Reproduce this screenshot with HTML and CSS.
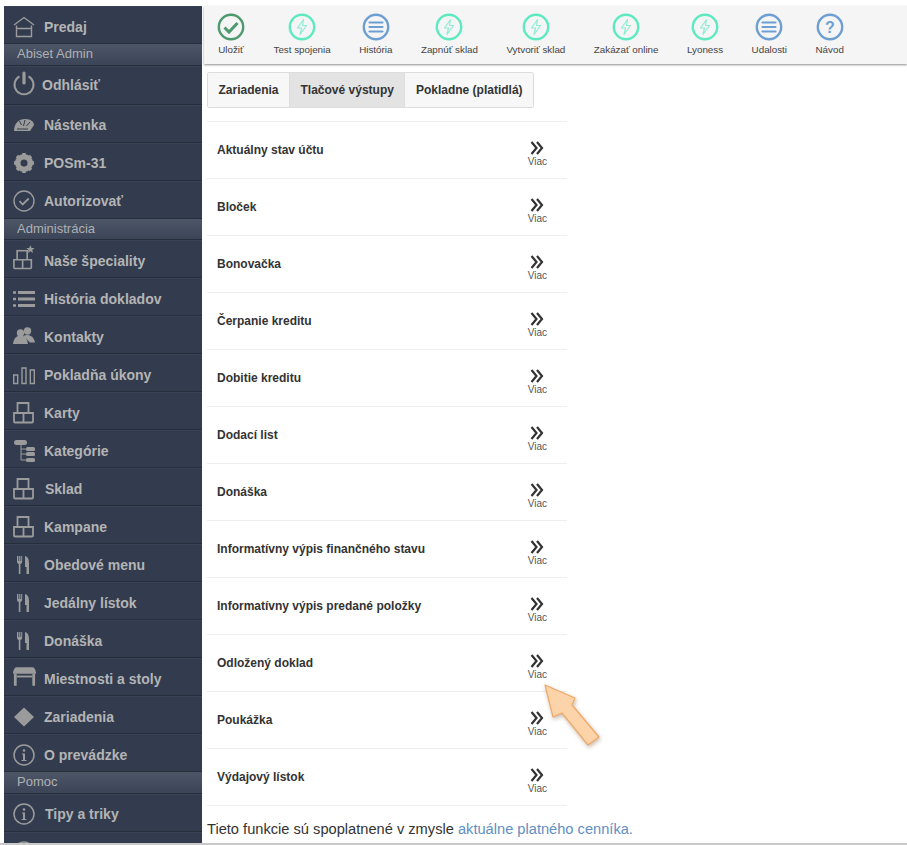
FILE: index.html
```html
<!DOCTYPE html>
<html lang="sk">
<head>
<meta charset="utf-8">
<title>Tlačové výstupy</title>
<link rel="stylesheet" href="styles.css">
</head>
<body>
<svg class="defs" width="0" height="0" aria-hidden="true">
  <symbol id="boxes" viewBox="0 -2 22 22"><path d="M4.500-1h11v10h-11zM1 9h9.500v9.500H2a1 1 0 0 1-1-1zM10.500 9H20v8.500a1 1 0 0 1-1 1h-8.500z" fill="none" stroke="currentColor" stroke-width="1.800"/></symbol>
  <symbol id="cutlery" viewBox="0 0 12 18" preserveAspectRatio="none"><path d="M0 0v5.500q0 2 1.800 2.500v10h1.600V8q1.800-.5 1.800-2.500V0h-1v5h-.8V0H2.200v5h-.8V0z" fill="currentColor"/><path d="M8 0q4 1 4 7v11H9.500v-7H8z" fill="currentColor"/></symbol>
  <symbol id="info" viewBox="0 0 22 22"><circle cx="11" cy="11" r="10" fill="none" stroke="currentColor" stroke-width="1.500"/><circle cx="11" cy="6.500" r="1.300" fill="currentColor"/><path d="M9 9.500h3v6.500h1.500v1h-5v-1H10v-5.500H9z" fill="currentColor"/></symbol>
  <symbol id="bolt" viewBox="0 0 28 28"><circle cx="14" cy="14" r="12.200" fill="none" stroke="#5eeac0" stroke-width="2.400"/><path d="M15.500 6.500 9.500 15h4l-1.500 6.500 6.500-9h-4z" fill="none" stroke="#8feed2" stroke-width="1.200" stroke-linejoin="round"/></symbol>
  <symbol id="lines" viewBox="0 0 28 28"><circle cx="14" cy="14" r="12.200" fill="none" stroke="#6d9fd2" stroke-width="2.400"/><path d="M7.500 9.500h13M7.500 14h13M7.500 18.500h13" stroke="#6d9fd2" stroke-width="2.200" stroke-linecap="round"/></symbol>
  <symbol id="more" viewBox="0 0 14 14"><path d="M1.500 1 6.500 7l-5 6M7 1l5 6-5 6" fill="none" stroke="#333" stroke-width="2.200"/></symbol>
</svg>

<div class="shell">
  <nav class="sidebar">
    <a class="item"><svg class="ico" viewBox="0 0 22 22"><path d="M1 9 11 1.500 21 9M3.500 9.500v11h15v-11M3.500 12.500h15" fill="none" stroke="currentColor" stroke-width="1.400"/></svg>Predaj</a>
    <div class="head">Abiset Admin</div>
    <a class="item item-tall"><svg class="ico ico-power" viewBox="0 0 22 22"><path d="M6.500 3.500a9.500 9.500 0 1 0 9 0" fill="none" stroke="currentColor" stroke-width="2"/><path d="M11 0v10" stroke="currentColor" stroke-width="3.200" stroke-linecap="round"/></svg><span class="nudge-l">Odhlásiť</span></a>
    <a class="item"><svg class="ico" viewBox="0 0 22 22"><path d="M1 17C1 9 6 5 12 5s9 3 9 6l-4 6H1z" fill="currentColor"/><path d="M6.500 7l2 4M12 6l-1.500 6M17 8l-3.500 4M4 15h11" stroke="#333c4f" stroke-width="1"/></svg>Nástenka</a>
    <a class="item"><svg class="ico" viewBox="0 0 22 22"><circle cx="11" cy="11" r="6.500" fill="none" stroke="currentColor" stroke-width="5"/><path d="M11 1v20M1 11h20M4 4l14 14M18 4 4 18" stroke="currentColor" stroke-width="3.500"/><circle cx="11" cy="11" r="3.500" fill="#333c4f"/></svg>POSm-31</a>
    <a class="item"><svg class="ico" viewBox="0 0 22 22"><circle cx="11" cy="11" r="10" fill="none" stroke="currentColor" stroke-width="1.400"/><path d="M6.500 11l3.200 3.500 6-6" fill="none" stroke="currentColor" stroke-width="1.800"/></svg>Autorizovať</a>
    <div class="head">Administrácia</div>
    <a class="item"><svg class="ico ico-star" viewBox="0 0 24 27"><use href="#boxes" x="0" y="5" width="22" height="22"/><path d="M19 0l1.300 3h3.200l-2.500 2.200.8 3.300-2.800-1.800-2.800 1.800.8-3.300L14.500 3h3.200z" fill="currentColor"/></svg>Naše špeciality</a>
    <a class="item"><svg class="ico" viewBox="0 0 22 22"><path d="M5 4.500h17M5 11h17M5 17.500h17" stroke="currentColor" stroke-width="3"/><path d="M0 4.500h3M0 11h3M0 17.500h3" stroke="currentColor" stroke-width="2.500"/></svg>História dokladov</a>
    <a class="item"><svg class="ico" viewBox="0 0 22 22"><circle cx="14.500" cy="5" r="3.700" fill="currentColor"/><path d="M10 10q4.500-2 8 0 3 1.500 4 6.500h-5z" fill="currentColor"/><circle cx="7.500" cy="7" r="3.700" fill="currentColor"/><path d="M0 18q1-7 5-8 3-.5 5 0 4 1.500 5 8z" fill="currentColor"/></svg>Kontakty</a>
    <a class="item"><svg class="ico" viewBox="0 0 22 22"><path d="M.7 11h4v8.500h-4zM9 4h4v15.500H9zM17.300 6h4v13.500h-4z" fill="none" stroke="currentColor" stroke-width="1.400"/></svg>Pokladňa úkony</a>
    <a class="item"><svg class="ico"><use href="#boxes"/></svg>Karty</a>
    <a class="item"><svg class="ico" viewBox="0 0 22 22"><rect x="1" y="0" width="13" height="5" rx="2.500" fill="currentColor"/><rect x="13" y="7" width="9" height="4" rx="1.500" fill="currentColor"/><rect x="13" y="12" width="9" height="4" rx="1.500" fill="currentColor"/><rect x="13" y="18" width="9" height="4" rx="1.500" fill="currentColor"/><path d="M8 5v15h5M8 9h5M8 14h5" fill="none" stroke="currentColor"/></svg>Kategórie</a>
    <a class="item"><svg class="ico"><use href="#boxes"/></svg><span class="nudge-r">Sklad</span></a>
    <a class="item"><svg class="ico"><use href="#boxes"/></svg>Kampane</a>
    <a class="item"><svg class="ico ico-cut"><use href="#cutlery"/></svg>Obedové menu</a>
    <a class="item"><svg class="ico ico-cut"><use href="#cutlery"/></svg>Jedálny lístok</a>
    <a class="item"><svg class="ico ico-cut"><use href="#cutlery"/></svg>Donáška</a>
    <a class="item"><svg class="ico ico-table" viewBox="0 0 25 20"><path d="M4 0h17q3 0 4 6v1H0V6q1-6 4-6z" fill="currentColor"/><path d="M1 7h3v13H1zM21 7h3v13h-3z" fill="currentColor"/><path d="M4 9h17v2H4z" fill="currentColor"/></svg>Miestnosti a stoly</a>
    <a class="item"><svg class="ico" viewBox="0 0 22 22"><path d="M11 1.500 21 11 11 20.500 1 11z" fill="currentColor"/></svg>Zariadenia</a>
    <a class="item"><svg class="ico"><use href="#info"/></svg>O prevádzke</a>
    <div class="head">Pomoc</div>
    <a class="item"><svg class="ico"><use href="#info"/></svg><span class="nudge-r">Tipy a triky</span></a>
    <a class="item"><svg class="ico"><use href="#info"/></svg></a>
  </nav>

  <main class="main">
    <div class="toolbar">
      <a class="tool"><svg class="tool-ico" viewBox="0 0 28 28"><circle cx="14" cy="14" r="12.200" fill="none" stroke="#4c9a6e" stroke-width="2.400"/><path d="M7.500 14.500l4.500 4.500 8.500-9" fill="none" stroke="#4c9a6e" stroke-width="3"/></svg>Uložiť</a>
      <a class="tool"><svg class="tool-ico"><use href="#bolt"/></svg>Test spojenia</a>
      <a class="tool"><svg class="tool-ico"><use href="#lines"/></svg>História</a>
      <a class="tool"><svg class="tool-ico"><use href="#bolt"/></svg>Zapnúť sklad</a>
      <a class="tool"><svg class="tool-ico"><use href="#bolt"/></svg>Vytvoriť sklad</a>
      <a class="tool"><svg class="tool-ico"><use href="#bolt"/></svg>Zakázať online</a>
      <a class="tool"><svg class="tool-ico"><use href="#bolt"/></svg>Lyoness</a>
      <a class="tool"><svg class="tool-ico"><use href="#lines"/></svg>Udalosti</a>
      <a class="tool"><svg class="tool-ico" viewBox="0 0 28 28"><circle cx="14" cy="14" r="12.200" fill="none" stroke="#6d9fd2" stroke-width="2.400"/><text class="q" x="14" y="19.500" text-anchor="middle">?</text></svg>Návod</a>
    </div>

    <div class="content">
      <div class="tabs">
        <a class="tab">Zariadenia</a>
        <a class="tab tab-on">Tlačové výstupy</a>
        <a class="tab">Pokladne (platidlá)</a>
      </div>

      <div class="list">
        <div class="row"><b>Aktuálny stav účtu</b><a class="more"><svg><use href="#more"/></svg>Viac</a></div>
        <div class="row"><b>Bloček</b><a class="more"><svg><use href="#more"/></svg>Viac</a></div>
        <div class="row"><b>Bonovačka</b><a class="more"><svg><use href="#more"/></svg>Viac</a></div>
        <div class="row"><b>Čerpanie kreditu</b><a class="more"><svg><use href="#more"/></svg>Viac</a></div>
        <div class="row"><b>Dobitie kreditu</b><a class="more"><svg><use href="#more"/></svg>Viac</a></div>
        <div class="row"><b>Dodací list</b><a class="more"><svg><use href="#more"/></svg>Viac</a></div>
        <div class="row"><b>Donáška</b><a class="more"><svg><use href="#more"/></svg>Viac</a></div>
        <div class="row"><b>Informatívny výpis finančného stavu</b><a class="more"><svg><use href="#more"/></svg>Viac</a></div>
        <div class="row"><b>Informatívny výpis predané položky</b><a class="more"><svg><use href="#more"/></svg>Viac</a></div>
        <div class="row"><b>Odložený doklad</b><a class="more"><svg><use href="#more"/></svg>Viac</a></div>
        <div class="row"><b>Poukážka</b><a class="more"><svg><use href="#more"/></svg>Viac</a></div>
        <div class="row"><b>Výdajový lístok</b><a class="more"><svg><use href="#more"/></svg>Viac</a></div>
      </div>

      <p class="note">Tieto funkcie sú spoplatnené v zmysle <a class="link">aktuálne platného cenníka.</a></p>
    </div>

    <svg class="arrow" viewBox="0 0 64 70" aria-hidden="true">
      <path d="M4 6 34 19 31 26 58 58 47 66 21 34 12 38z" fill="#fdd3a9" stroke="#eea968" stroke-width="1.200" stroke-linejoin="round"/>
    </svg>
  </main>
</div>
<div class="bottom"></div>
</body>
</html>
```

FILE: styles.css
```css
* { box-sizing: border-box; }

html, body {
  margin: 0;
  height: 845px;
  overflow: hidden;
  background: #fff;
  font-family: "Liberation Sans", Arial, sans-serif;
  color: #333;
}

.defs { position: absolute; }

.shell {
  display: flex;
  height: 843px;
  padding: 6px 0 0 4px;
  overflow: hidden;
}

.bottom {
  height: 2px;
  background: #c9c9c9;
}

/* sidebar */
.sidebar {
  flex: 0 0 198px;
  background: #333c4f;
}

.item {
  display: flex;
  align-items: center;
  height: 38px;
  padding: 4px 0 0 9px;
  gap: 9px;
  border-bottom: 1px solid #262d3b;
  box-shadow: inset 0 1px 0 #3a4356;
  color: #b4b4b4;
  font-size: 14px;
  font-weight: bold;
}

.item-tall {
  height: 39px;
  padding-top: 0;
}

.ico {
  flex: 0 0 22px;
  width: 22px;
  height: 22px;
  color: #9b9b9b;
  overflow: visible;
}

.ico-power { transform: translateY(-1px); }
.ico-star { height: 27px; transform: translateY(-3px); }
.ico-cut {
  flex-basis: 12px;
  width: 12px;
  height: 18px;
  margin: 0 6px 0 4px;
}
.ico-table {
  flex-basis: 23px;
  width: 23px;
  height: 19px;
  margin-right: -1px;
  transform: translateY(-2px);
}

.nudge-l { margin-left: -2px; }
.nudge-r { margin-left: 1px; }

.head {
  height: 21.500px;
  padding-left: 13px;
  line-height: 20px;
  font-size: 13px;
  color: #aeb0b4;
  background: linear-gradient(#4d5667, #3c4557);
  border-bottom: 1px solid #262d3b;
}

/* main column */
.main {
  position: relative;
  flex: 1;
  min-width: 0;
}

.toolbar {
  display: flex;
  height: 58px;
  margin-left: 2px;
  padding: 7px 0 0 13px;
  gap: 28.500px;
  background: #f5f5f5;
  box-shadow: 0 1px 2px #8f8f8f;
}

.tool {
  display: flex;
  flex-direction: column;
  align-items: center;
  font-size: 9.800px;
  line-height: 12px;
  color: #444;
  white-space: nowrap;
}

.tool-ico {
  width: 28px;
  height: 28px;
  margin-bottom: 3px;
}

.q {
  font: bold 16px "Liberation Sans", Arial, sans-serif;
  fill: #6d9fd2;
}

.content {
  padding: 8px 0 0 5px;
}

.tabs {
  display: inline-flex;
  border: 1px solid #ddd;
  border-radius: 2px;
  vertical-align: top;
}

.tab {
  height: 34px;
  line-height: 34px;
  padding: 0 10.500px;
  font-size: 12px;
  font-weight: bold;
  color: #333;
  background: #f7f7f7;
  border-left: 1px solid #ddd;
}

.tab:first-child { border-left: 0; }
.tab-on { background: #e3e3e3; }

.list {
  width: 360px;
  margin-top: 13px;
  border-top: 1px solid #eee;
}

.row {
  display: flex;
  align-items: center;
  justify-content: space-between;
  height: 57px;
  padding: 0 20px 0 10px;
  border-bottom: 1px solid #eee;
  font-size: 12px;
}

.more {
  display: flex;
  flex-direction: column;
  align-items: center;
  margin-top: 7px;
  font-size: 10px;
  line-height: 10px;
  color: #555;
}

.more svg {
  width: 14px;
  height: 14px;
  margin-bottom: 2px;
}

.note {
  margin: 14px 0 0;
  font-size: 14.650px;
  line-height: 18px;
  color: #333;
}

.link { color: #5f8fc4; }

.arrow {
  position: absolute;
  left: 339px;
  top: 673px;
  width: 64px;
  height: 70px;
  filter: drop-shadow(1px 2px 2px rgba(120, 90, 60, .4));
}
```
